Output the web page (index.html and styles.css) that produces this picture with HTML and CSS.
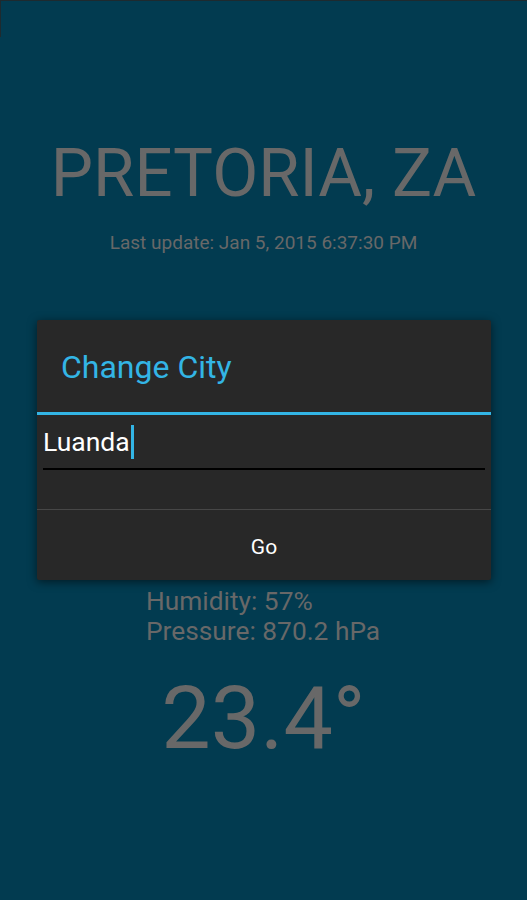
FILE: index.html
```html
<!DOCTYPE html>
<html lang="en">
<head>
    <meta charset="UTF-8">
    <meta name="viewport" content="width=device-width, initial-scale=1.0">
    <title>Weather</title>
    <link rel="stylesheet" href="styles.css">
</head>
<body>
    <div class="screen">
        <div class="edge"></div>

        <header class="city-block">
            <h1 class="city">PRETORIA, ZA</h1>
            <p class="updated">Last update: Jan 5, 2015 6:37:30 PM</p>
        </header>

        <div class="details">
            <p>Humidity: 57%</p>
            <p>Pressure: 870.2 hPa</p>
        </div>

        <p class="temp">23.4°</p>
    </div>

    <!-- Change city dialog -->
    <div class="dialog">
        <h2 class="dialog-title">Change City</h2>
        <div class="dialog-body">
            <div class="field">
                <span class="field-text">Luanda</span><span class="caret"></span>
            </div>
        </div>
        <button class="dialog-button" type="button">Go</button>
    </div>
</body>
</html>
```

FILE: styles.css
```css
html, body {
    margin: 0;
    padding: 0;
}

body {
    font-family: Roboto, "Liberation Sans", sans-serif;
    background-color: #023b50;
    width: 527px;
    height: 900px;
    overflow: hidden;
}

.screen {
    height: 899px;
    border-top: 1px solid #1e2a2f;
    color: #686868;
}

.edge {
    width: 1px;
    height: 36px;
    background-color: #1e2a2f;
    margin-bottom: -36px;
}

.city-block {
    text-align: center;
    padding-top: 132px;
}

.city {
    margin: 0;
    font-size: 67px;
    font-weight: 400;
    line-height: 80px;
}

.updated {
    margin: 0;
    font-size: 19px;
    line-height: 24px;
    margin-top: 18px;
}

.details {
    margin-top: 331px;
    padding-left: 146px;
    font-size: 26.3px;
    line-height: 30px;
}

.details p {
    margin: 0;
}

.temp {
    margin: 22px 0 0;
    text-align: center;
    font-size: 88px;
    line-height: 100px;
}

/* Dialog */
.dialog {
    position: absolute;
    left: 37px;
    top: 320px;
    width: 454px;
    background-color: #282828;
    border-radius: 2px;
    box-shadow: 0 2px 10px rgba(0, 0, 0, 0.55);
    display: flex;
    flex-direction: column;
}

.dialog-title {
    margin: 0;
    height: 95px;
    display: flex;
    align-items: center;
    padding: 2px 0 0 24px;
    color: #33b5e5;
    font-size: 32px;
    font-weight: 400;
    border-bottom: 3px solid #33b5e5;
    box-sizing: border-box;
}

.dialog-body {
    height: 95px;
    padding: 0 6px;
    border-bottom: 1px solid #474747;
    box-sizing: border-box;
}

.field {
    height: 53px;
    border-bottom: 2px solid #000;
    display: flex;
    align-items: center;
}

.field-text {
    color: #fff;
    font-size: 26.5px;
}

.caret {
    width: 3px;
    height: 34px;
    background-color: #33b5e5;
    margin-left: 1px;
}

.dialog-button {
    height: 70px;
    border: none;
    background: none;
    color: #fff;
    font-family: inherit;
    font-size: 21px;
    padding: 0;
    padding-top: 3px;
}
```
